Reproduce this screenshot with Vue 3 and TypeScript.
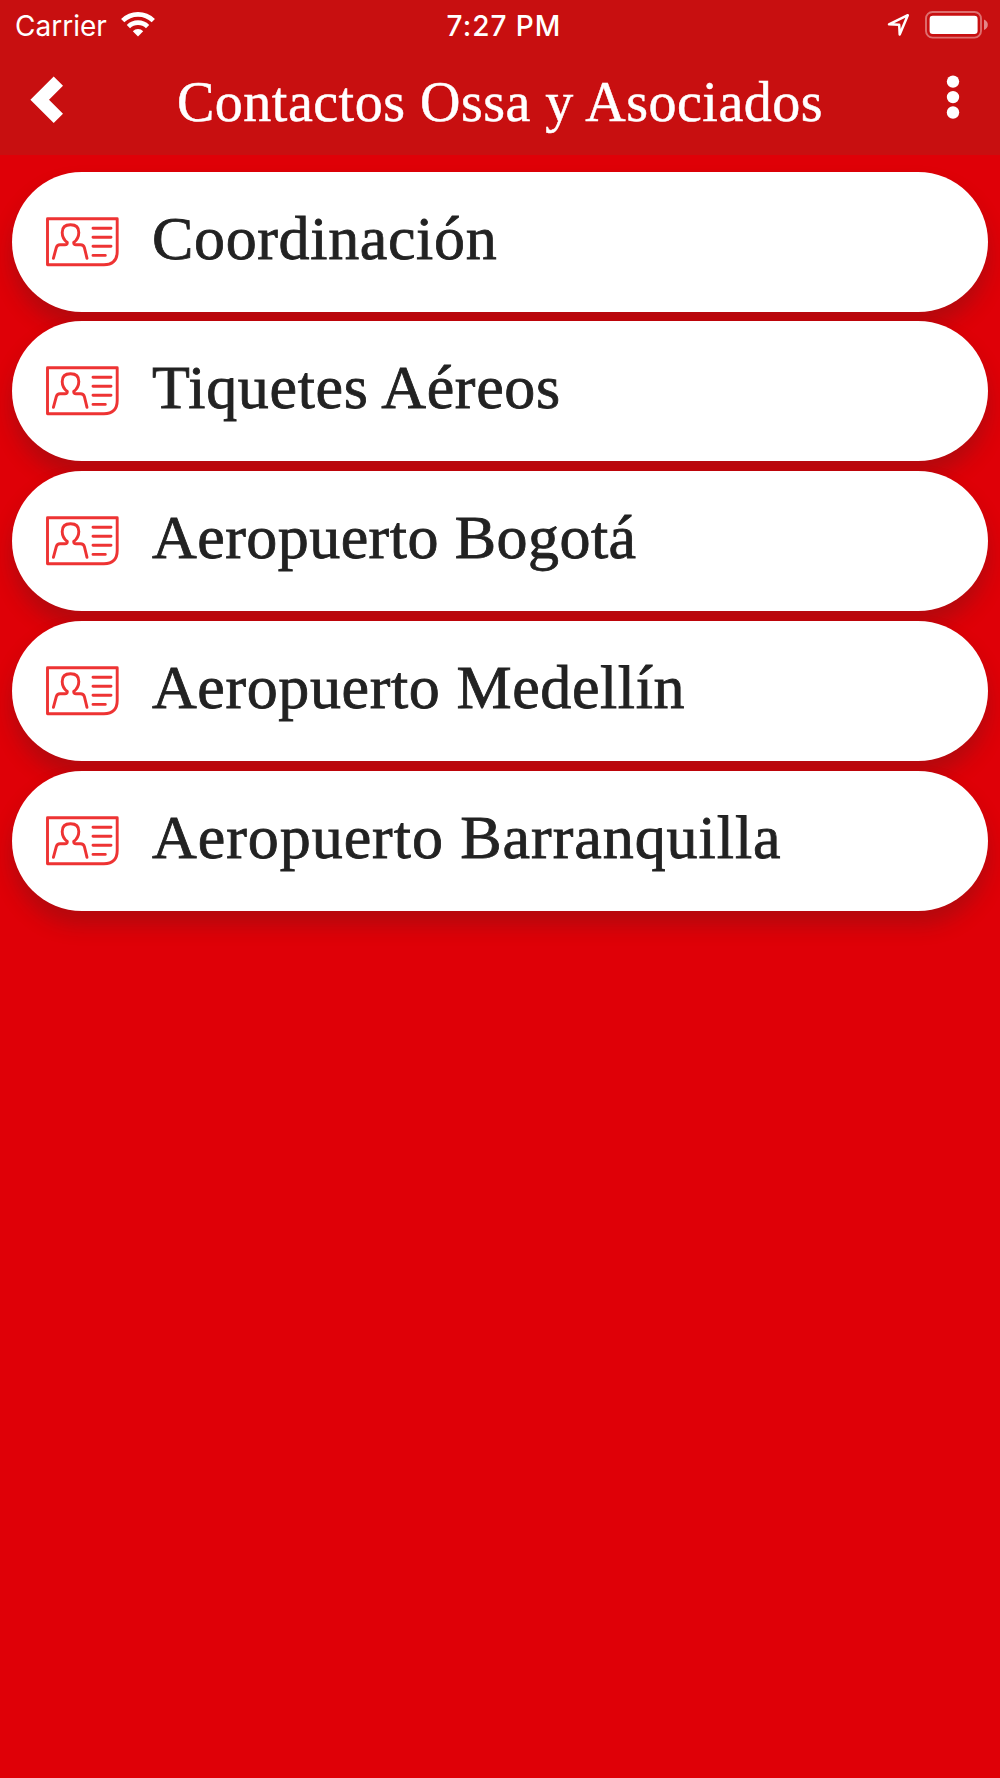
<script setup lang="ts">
interface Contact {
  name: string
  tracking: number
}

const title = 'Contactos Ossa y Asociados'

const contacts: Contact[] = [
  { name: 'Coordinación', tracking: 0.65 },
  { name: 'Tiquetes Aéreos', tracking: 0.65 },
  { name: 'Aeropuerto Bogotá', tracking: 0.45 },
  { name: 'Aeropuerto Medellín', tracking: 0.6 },
  { name: 'Aeropuerto Barranquilla', tracking: 0.95 },
]
</script>

<template>
  <div class="screen">
    <header class="header">
      <div class="status">
        <div class="status-side">
          <span class="carrier">Carrier</span>
          <svg class="wifi" width="34" height="25" viewBox="0 0 34 25">
            <g fill="none" stroke="#fff" stroke-width="4.6">
              <path d="M1.7 8.6A21.8 21.8 0 0 1 32.3 8.6" />
              <path d="M7.4 14.6A13.7 13.7 0 0 1 26.6 14.6" />
            </g>
            <path d="M17 24.4l-5.2-5.2a7.4 7.4 0 0 1 10.4 0z" fill="#fff" />
          </svg>
        </div>
        <span class="time">7:27 PM</span>
        <div class="status-side end">
          <svg class="location" width="24" height="24" viewBox="0 0 24 24">
            <path d="M2 11.3L20.8 2.2L12.7 21.5L12.2 11.7Z" fill="none" stroke="#fff" stroke-width="2.5" stroke-linejoin="round" />
          </svg>
          <svg class="battery" width="64" height="28" viewBox="0 0 64 28">
            <rect x="1" y="1" width="55" height="25.6" rx="6.5" fill="none" stroke="#fff" stroke-opacity=".4" stroke-width="1.9" />
            <rect x="4.6" y="4.7" width="48" height="18.2" rx="3.2" fill="#fff" />
            <path d="M59 8.5Q62.8 10.2 62.8 13.8T59 19z" fill="#fff" fill-opacity=".5" />
          </svg>
        </div>
      </div>
      <div class="nav">
        <svg class="back" width="34" height="48" viewBox="0 0 34 48">
          <path d="M23.7 .5L33 9.8L19 23.8L33 37.8L23.7 47.1L.4 23.8Z" fill="#fff" />
        </svg>
        <h1 class="title">{{ title }}</h1>
        <svg class="more" width="14" height="44" viewBox="0 0 14 44">
          <circle cx="7" cy="6.6" r="6.2" fill="#fff" />
          <circle cx="7" cy="22.1" r="6.2" fill="#fff" />
          <circle cx="7" cy="37.5" r="6.2" fill="#fff" />
        </svg>
      </div>
    </header>
    <main class="list">
      <div v-for="contact in contacts" :key="contact.name" class="row">
        <svg class="card-icon" width="73" height="50" viewBox="0 0 73 50">
          <g fill="none" stroke="#ee3333" stroke-width="2.9" stroke-linecap="round" stroke-linejoin="round">
            <path d="M1.5 1.7H71.2V34.5Q71.2 47.7 58 47.7H1.5Z" />
            <path d="M7.4 41.3L10.3 30.6Q11.1 27.8 14 27.8H19Q21.3 27.8 21.3 25.5Q16.2 21.5 16.2 15.4C16.2 10.6 19.3 7.8 24.5 7.8S32.8 10.6 32.8 15.4Q32.8 21.5 27.7 25.5Q27.7 27.8 30 27.8H34.5Q37.6 27.8 38.4 30.6L41 41.3" />
            <path d="M47 11.2H65M47 20.2H65M47 29.3H65M47 38.4H59.3" />
          </g>
        </svg>
        <span class="label" :style="{ letterSpacing: contact.tracking + 'px' }">{{ contact.name }}</span>
      </div>
    </main>
  </div>
</template>

<style>
body {
  margin: 0;
  background: #df0007;
}
</style>

<style scoped>
.screen {
  width: 1000px;
  height: 1778px;
  overflow: hidden;
  background: #df0007;
}
.header {
  height: 154.6px;
  background: #c80f10;
  color: #fff;
}
.status {
  display: flex;
  align-items: center;
  height: 50px;
  font-family: Inter, sans-serif;
  line-height: 50px;
}
.status-side {
  display: flex;
  flex: 1;
  align-items: center;
  padding-left: 15px;
}
.status-side.end {
  justify-content: flex-end;
  padding: 0 11px 0 0;
}
.carrier {
  padding-top: 1px;
  font-size: 28px;
}
.wifi {
  margin: -1px 0 0 14px;
}
.time {
  padding: 1px 0 0 4px;
  font-size: 28px;
  font-weight: 500;
  letter-spacing: 1px;
}
.location {
  margin-right: 14px;
}
.battery {
  margin-top: -1px;
}
.nav {
  display: flex;
  align-items: flex-start;
  height: 104px;
  padding: 0 40px 0 30px;
}
.back {
  margin-top: 26px;
}
.title {
  margin: 18px 0 0 113px;
  font: 400 56px/68px "Liberation Serif", serif;
  letter-spacing: 0.5px;
  white-space: nowrap;
  -webkit-text-stroke: 0.5px #fff;
}
.more {
  margin: 25px 0 0 auto;
}
.list {
  display: flex;
  flex-direction: column;
  gap: 9.8px;
  padding: 17px 12px;
}
.row {
  display: flex;
  align-items: flex-start;
  box-sizing: border-box;
  height: 140px;
  padding-left: 34px;
  border-radius: 70px;
  background: #fff;
  box-shadow: 0 14px 20px rgba(50, 36, 36, 0.25);
}
.card-icon {
  flex: none;
  margin-top: 45px;
}
.label {
  margin: 31px 0 0 33px;
  font: 400 62px/70px "Liberation Serif", serif;
  color: #222;
  white-space: nowrap;
  -webkit-text-stroke: 0.8px #222;
}
</style>
